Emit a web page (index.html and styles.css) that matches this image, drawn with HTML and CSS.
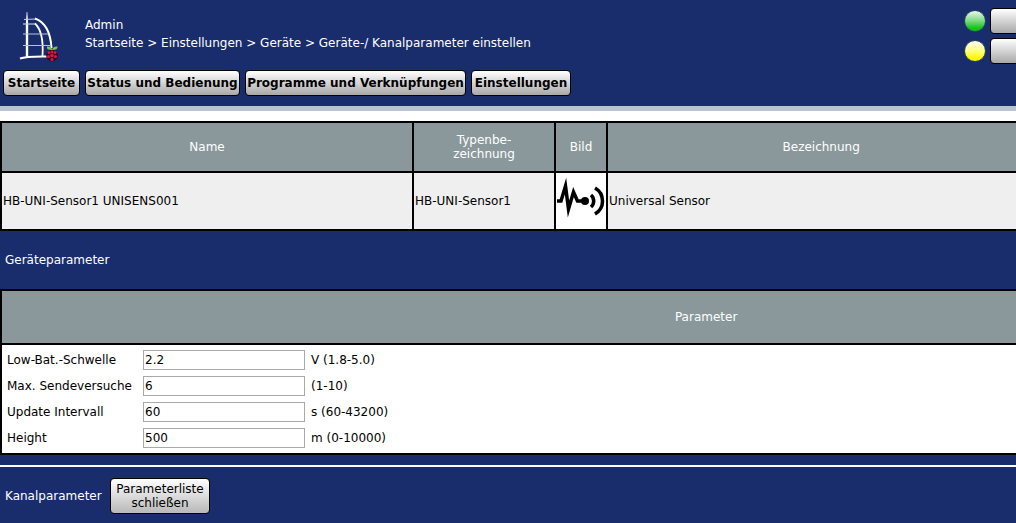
FILE: index.html
```html
<!DOCTYPE html>
<html lang="de">
<head>
<meta charset="utf-8">
<title>Geräte-/ Kanalparameter einstellen</title>
<link rel="stylesheet" href="styles.css">
</head>
<body>
<header class="header">
  <div class="top">
    <svg class="logo" viewBox="0 0 48 56" role="img" aria-label="Logo">
      <path d="M10.700 4L11.300 4L12.200 16V49H9.800V16Z" fill="#fff"/>
      <g fill="none" stroke="#fff">
        <path d="M8 11.500L20 11" stroke="#c5cce2" stroke-width="1.200"/>
        <path d="M19 10.500C29 14 34.500 24 35.500 40" stroke-width="2"/>
        <path d="M7 16H20" stroke="#c5cce2" stroke-width="1.200"/>
        <path d="M19 15.500C25 21 27.500 32 26.500 48" stroke-width="1.800"/>
        <path d="M7 26H32M7 37.500H35" stroke="#b9c1da" stroke-width="1.200"/>
        <path d="M4 50.500Q10 48 34 48.500" stroke-width="2"/>
      </g>
      <circle cx="36" cy="47.500" r="5.800" fill="#300818"/>
      <path d="M36 42Q30 42 31 38.500Q36 38 36 42Q37 38 41.500 38.500Q42 42 36 42" fill="#7cc352"/>
      <g fill="#e01048"><circle cx="33" cy="44.500" r="1.500"/><circle cx="36" cy="44" r="1.400"/><circle cx="39" cy="44.500" r="1.500"/><circle cx="36" cy="47.500" r="1.800"/><circle cx="32.500" cy="48.500" r="1.600"/><circle cx="39.500" cy="48.500" r="1.600"/><circle cx="36" cy="51.500" r="1.600"/></g>
    </svg>
    <div class="crumbs">
      <div>Admin</div>
      <div>Startseite &gt; Einstellungen &gt; Geräte &gt; Geräte-/ Kanalparameter einstellen</div>
    </div>
    <div class="status">
      <div class="status-row"><span class="led green"></span><button class="btn status-btn" aria-label="Alarmmeldungen"></button></div>
      <div class="status-row"><span class="led yellow"></span><button class="btn status-btn" aria-label="Servicemeldungen"></button></div>
    </div>
  </div>
  <nav class="nav">
    <button class="btn">Startseite</button>
    <button class="btn">Status und Bedienung</button>
    <button class="btn">Programme und Verknüpfungen</button>
    <button class="btn">Einstellungen</button>
  </nav>
</header>
<main>
  <div class="device-wrap">
    <table class="grid device">
      <colgroup><col class="c-name"><col class="c-type"><col class="c-image"><col></colgroup>
      <thead><tr><th>Name</th><th>Typenbe-<br>zeichnung</th><th>Bild</th><th>Bezeichnung</th></tr></thead>
      <tbody><tr>
        <td>HB-UNI-Sensor1 UNISENS001</td>
        <td>HB-UNI-Sensor1</td>
        <td class="image"><svg class="sensor" viewBox="0 0 50 56" role="img" aria-label="Sensor">
          <path d="M1 28H5L9.500 13L12.500 36L17.500 19L21.500 28H28" fill="none" stroke="#000" stroke-width="3.500" stroke-miterlimit="8"/>
          <circle cx="29" cy="28" r="4" fill="#000"/>
          <path d="M35 22A8 8 0 0 1 35 34M39 15A15 15 0 0 1 39 41" fill="none" stroke="#000" stroke-width="3.500"/>
        </svg></td>
        <td>Universal Sensor</td>
      </tr></tbody>
    </table>
  </div>
  <h2 class="section">Geräteparameter</h2>
  <section class="params">
    <div class="params-head">Parameter</div>
    <form class="fields">
      <label for="lowbat">Low-Bat.-Schwelle</label><input id="lowbat" type="text" value="2.2"><span>V (1.8-5.0)</span>
      <label for="tries">Max. Sendeversuche</label><input id="tries" type="text" value="6"><span>(1-10)</span>
      <label for="interval">Update Intervall</label><input id="interval" type="text" value="60"><span>s (60-43200)</span>
      <label for="height">Height</label><input id="height" type="text" value="500"><span>m (0-10000)</span>
    </form>
  </section>
  <section class="channel">
    <span class="channel-label">Kanalparameter</span>
    <button class="btn close">Parameterliste<br>schließen</button>
  </section>
</main>
</body>
</html>
```
FILE: styles.css
```css
* { box-sizing: border-box; }
body {
  margin: 0;
  overflow: hidden;
  background: #192c6c;
  color: #000;
  font: 12px/14px Verdana, "DejaVu Sans", sans-serif;
}
.header { border-bottom: 5px solid #b9c5cb; }
.top { display: flex; height: 70px; color: #fff; }
.logo { width: 48px; height: 56px; margin: 8px 21px 0 16px; }
.crumbs { flex: 1; padding-top: 16px; line-height: 18px; white-space: nowrap; }
.status { display: grid; gap: 4px; align-content: start; padding-top: 8px; }
.status-row { display: flex; align-items: center; gap: 4px; }
.led { width: 22px; height: 22px; border-radius: 50%; border: 1px solid #24485f; }
.green { background: linear-gradient(#e9f9e9, #7bd982 50%, #14c414 85%); }
.yellow { background: linear-gradient(#fffff0, #ffff80 50%, #fff600 85%); }
.btn {
  height: 26px;
  padding: 0;
  border: 1px solid #000;
  border-radius: 4px;
  background: linear-gradient(#fff, #a8a8a8);
  color: #000;
  font: bold 12px/14px Verdana, "DejaVu Sans", sans-serif;
  white-space: nowrap;
}
.status-btn { width: 40px; margin-right: -14px; }
.nav {
  display: grid;
  grid-template-columns: 77px 155px 221px 100px;
  gap: 5px;
  padding: 0 3px 10px;
}
.device-wrap { padding-top: 10px; background: #fff; }
.grid { width: 102%; border-collapse: collapse; table-layout: fixed; }
.grid th, .grid td { border: 2px solid #000; padding: 0 1px; }
.grid th { height: 50px; background: #8a989b; color: #fff; font-weight: normal; }
.grid td { height: 58px; background: #efefef; }
.grid td.image { padding: 0; background: #fff; }
.c-name { width: 412px; }
.c-type { width: 142px; }
.c-image { width: 52px; }
.sensor { display: block; width: 50px; height: 56px; }
.section { margin: 0; padding: 22px 5px; font-size: 12px; font-weight: normal; color: #fff; }
.params { width: 139%; border: 2px solid #000; background: #fff; }
.params-head {
  padding: 19px 0;
  border-bottom: 2px solid #000;
  background: #8a989b;
  color: #fff;
  text-align: center;
}
.fields {
  display: grid;
  grid-template-columns: 130px 162px 1fr;
  gap: 6px;
  align-items: center;
  padding: 5px;
}
.fields input {
  width: 100%;
  height: 20px;
  padding: 1px;
  border: 1px solid #a9a9a9;
  font: inherit;
}
.channel {
  display: flex;
  align-items: center;
  gap: 5px;
  margin-top: 10px;
  padding: 11px 5px;
  border-top: 2px solid #fff;
  color: #fff;
}
.channel-label { width: 100px; }
.close { width: 100px; height: 36px; background: linear-gradient(#fff, #b8b8b8); font-weight: normal; }
```
